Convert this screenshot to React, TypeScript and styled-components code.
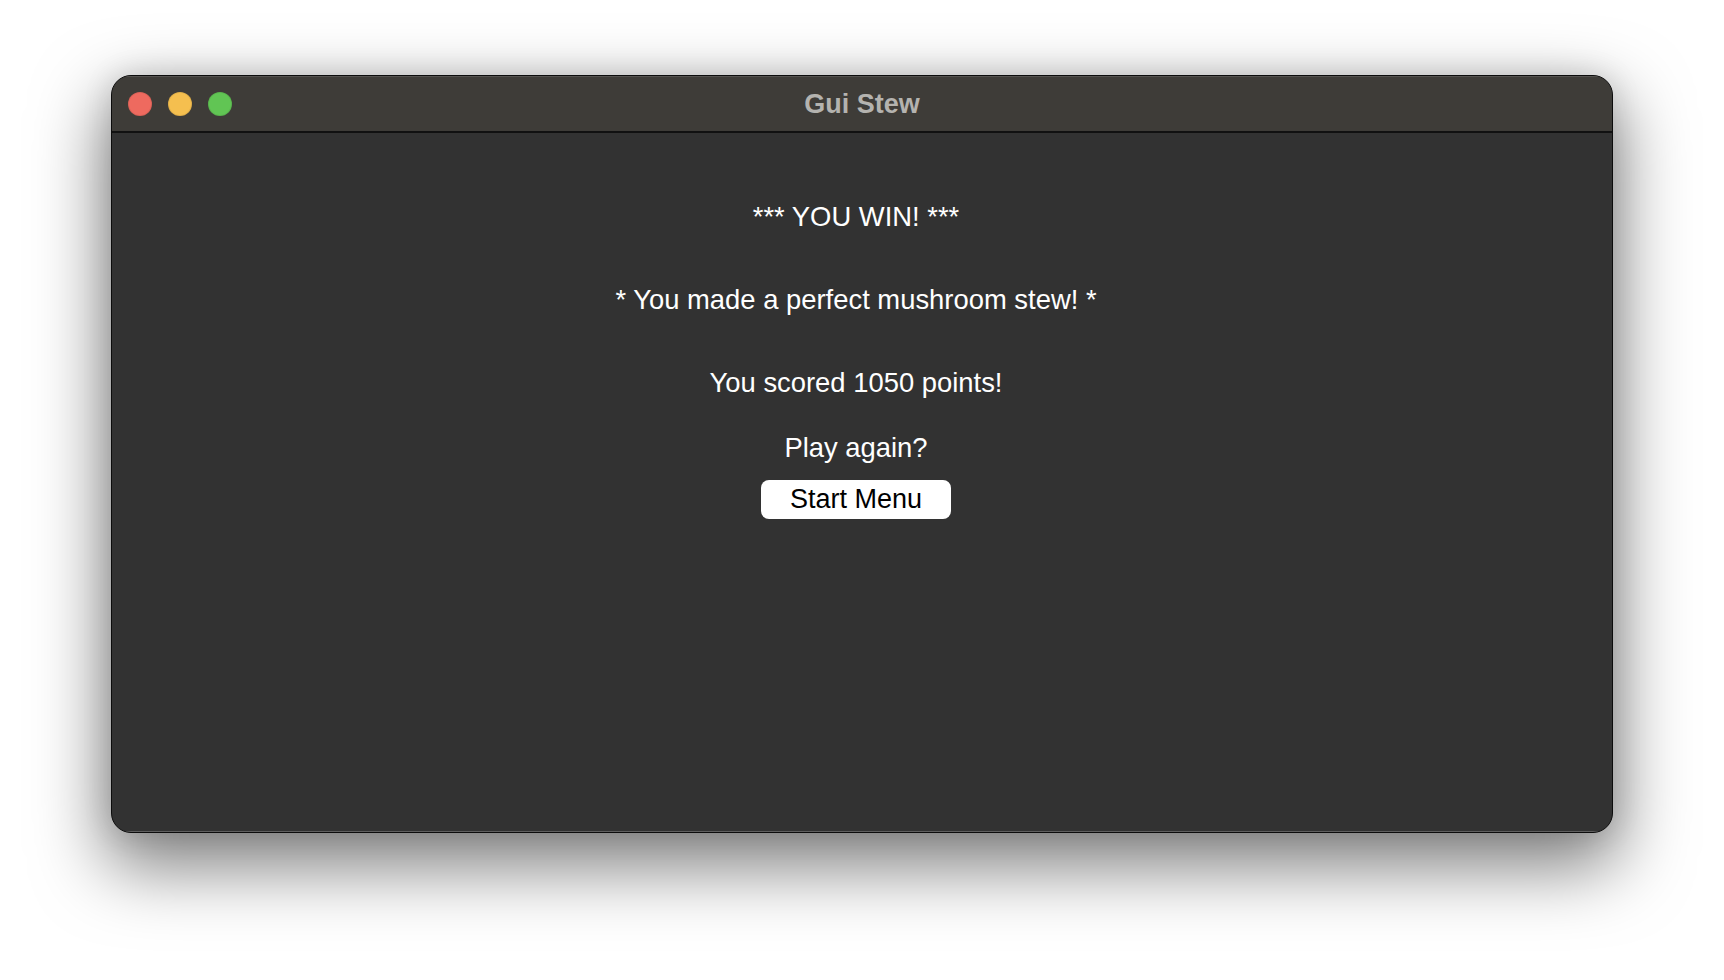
import React from "react";
import styled, { createGlobalStyle } from "styled-components";

const GlobalStyle = createGlobalStyle`
  html, body {
    margin: 0;
    padding: 0;
    background: #ffffff;
  }
  body {
    font-family: "Liberation Sans", Arial, sans-serif;
  }
`;

const Stage = styled.div`
  width: 1724px;
  height: 980px;
  box-sizing: border-box;
  padding: 75px 0 0 111px;
  background: #ffffff;
  overflow: hidden;
`;

const Window = styled.div`
  width: 1502px;
  height: 758px;
  box-sizing: border-box;
  border: 1px solid #0c0c0c;
  border-radius: 20px;
  overflow: hidden;
  display: flex;
  flex-direction: column;
  box-shadow: 0 28px 70px 6px rgba(0, 0, 0, 0.5), 0 0 30px rgba(0, 0, 0, 0.12);
  background: #323232;
`;

const TitleBar = styled.div`
  position: relative;
  height: 55px;
  flex: none;
  background: #3e3c38;
  border-bottom: 2px solid #111111;
  display: flex;
  align-items: center;
  justify-content: center;
  box-shadow: inset 0 1px 0 rgba(255, 255, 255, 0.12);
`;

const Lights = styled.div`
  position: absolute;
  left: 16px;
  top: 16px;
  display: flex;
  gap: 16px;
`;

const Light = styled.span<{ $color: string }>`
  width: 24px;
  height: 24px;
  border-radius: 50%;
  background: ${(p) => p.$color};
  box-shadow: inset 0 0 0 1px rgba(0, 0, 0, 0.08);
`;

const Title = styled.div`
  font-family: "Liberation Sans", Arial, sans-serif;
  font-weight: 700;
  font-size: 27px;
  color: #b4b3af;
  line-height: 30px;
`;

const Content = styled.div`
  flex: 1;
  display: flex;
  flex-direction: column;
  align-items: center;
  padding: 68px 12px 0 0;
  box-shadow: inset 0 -1px 0 rgba(255, 255, 255, 0.22);
`;

const Line = styled.div<{ $gap: number }>`
  font-family: "Liberation Sans", Arial, sans-serif;
  font-size: 27.4px;
  line-height: 32px;
  color: #ffffff;
  margin-top: ${(p) => p.$gap}px;
  white-space: nowrap;
`;

const Button = styled.button`
  margin-top: 16px;
  width: 190px;
  height: 39px;
  border: none;
  border-radius: 8px;
  background: #ffffff;
  color: #000000;
  font-family: "Liberation Sans", Arial, sans-serif;
  font-size: 27px;
  line-height: 39px;
  padding: 0;
  cursor: pointer;
`;

export default function App() {
  return (
    <>
      <GlobalStyle />
      <Stage>
        <Window>
          <TitleBar>
            <Lights>
              <Light $color="#ee6a5f" />
              <Light $color="#f5bf4f" />
              <Light $color="#61c554" />
            </Lights>
            <Title>Gui Stew</Title>
          </TitleBar>
          <Content>
            <Line $gap={0}>*** YOU WIN! ***</Line>
            <Line $gap={51}>* You made a perfect mushroom stew! *</Line>
            <Line $gap={51}>You scored 1050 points!</Line>
            <Line $gap={33}>Play again?</Line>
            <Button>Start Menu</Button>
          </Content>
        </Window>
      </Stage>
    </>
  );
}
